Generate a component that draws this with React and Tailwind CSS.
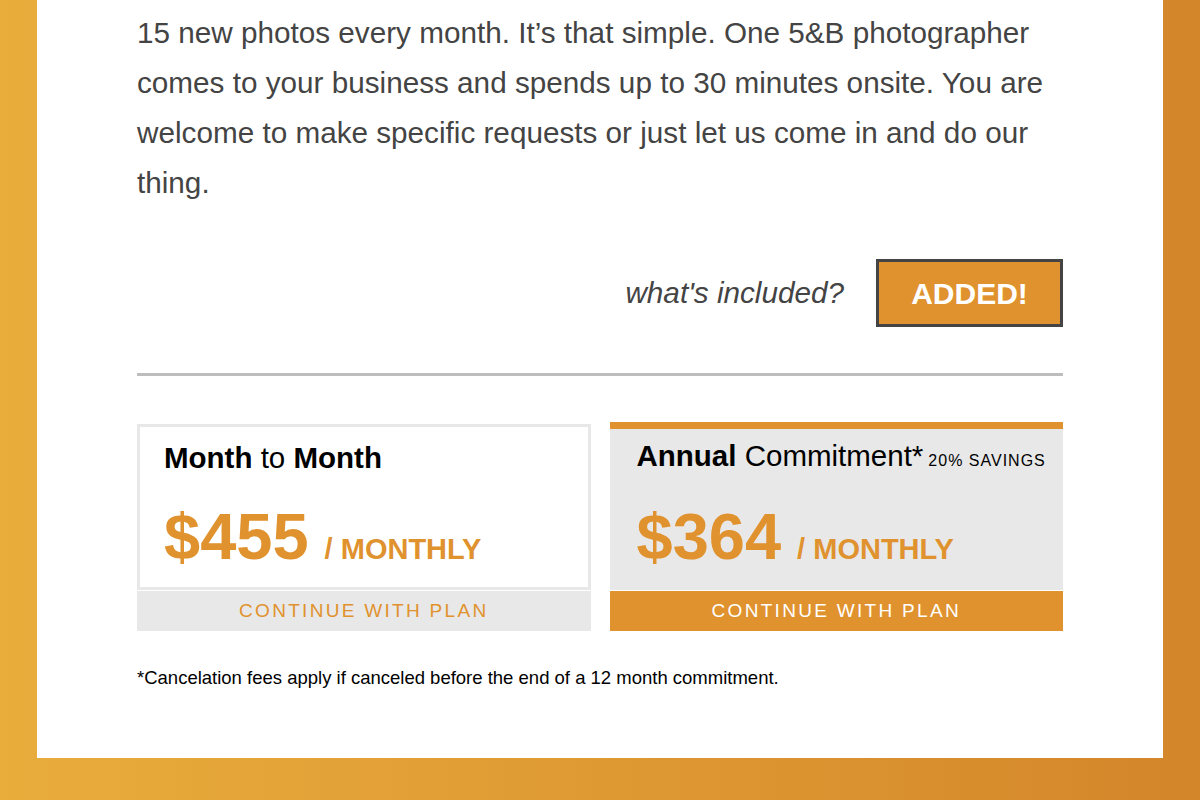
import React from "react";

const font = { fontFamily: '"Liberation Sans", Arial, Helvetica, sans-serif' };

function PlanCard({ featured, title, savings, price }) {
  return (
    <div className="min-w-0 flex flex-col">
      <div
        className={
          featured
            ? "h-[168px] bg-[#e8e8e8] border-t-[7px] border-[#e0922e] px-[27px] pt-[10px]"
            : "h-[166px] mt-[2px] bg-white border-[3px] border-[#e8e8e8] px-[24px] pt-[14px]"
        }
      >
        <div className="flex items-baseline whitespace-nowrap text-[29.5px] leading-[34px] text-black">
          <span>{title}</span>
          {savings ? (
            <span className="ml-[5px] text-[16px] tracking-[1px]">{savings}</span>
          ) : null}
        </div>
        <div
          className={`flex items-baseline whitespace-nowrap text-[#e0922e] font-bold ${
            featured ? "mt-[24px]" : "mt-[27px]"
          }`}
        >
          <span className="text-[65px] leading-[70px]">{price}</span>
          <span className="ml-[16px] text-[29px]">/ MONTHLY</span>
        </div>
      </div>
      <button
        type="button"
        className={`h-[40px] mt-[1px] text-[19px] tracking-[2.3px] ${
          featured ? "bg-[#e0922e] text-white" : "bg-[#e8e8e8] text-[#e0922e]"
        }`}
      >
        CONTINUE WITH PLAN
      </button>
    </div>
  );
}

export default function App() {
  return (
    <div
      className="w-full h-[800px] px-[37px] pb-[42px] bg-gradient-to-r from-[#e9ad3c] to-[#d4862a]"
      style={font}
    >
      <div className="h-[758px] bg-white px-[100px] pt-[8px]">
        <p className="text-[29.7px] leading-[50px] text-[#444]">
          15 new photos every month. It’s that simple. One 5&amp;B photographer comes to your
          business and spends up to 30 minutes onsite. You are welcome to make specific
          requests or just let us come in and do our thing.
        </p>

        <div className="flex items-center justify-end gap-[32px] mt-[51px]">
          <span className="text-[29.7px] italic text-[#444]">what's included?</span>
          <button
            type="button"
            className="w-[187px] h-[68px] border-[3px] border-[#444] bg-[#e0922e] text-white font-bold text-[30px]"
          >
            ADDED!
          </button>
        </div>

        <div className="h-[3px] bg-[#bdbdbd] mt-[46px]" />

        <div className="grid grid-cols-2 gap-[19px] mt-[46px]">
          <PlanCard
            title={
              <>
                <b>Month</b> to <b>Month</b>
              </>
            }
            price="$455"
          />
          <PlanCard
            featured
            title={
              <>
                <b>Annual</b> Commitment*
              </>
            }
            savings="20% SAVINGS"
            price="$364"
          />
        </div>

        <p className="mt-[37px] text-[18.5px] leading-[20px] text-black">
          *Cancelation fees apply if canceled before the end of a 12 month commitment.
        </p>
      </div>
    </div>
  );
}
